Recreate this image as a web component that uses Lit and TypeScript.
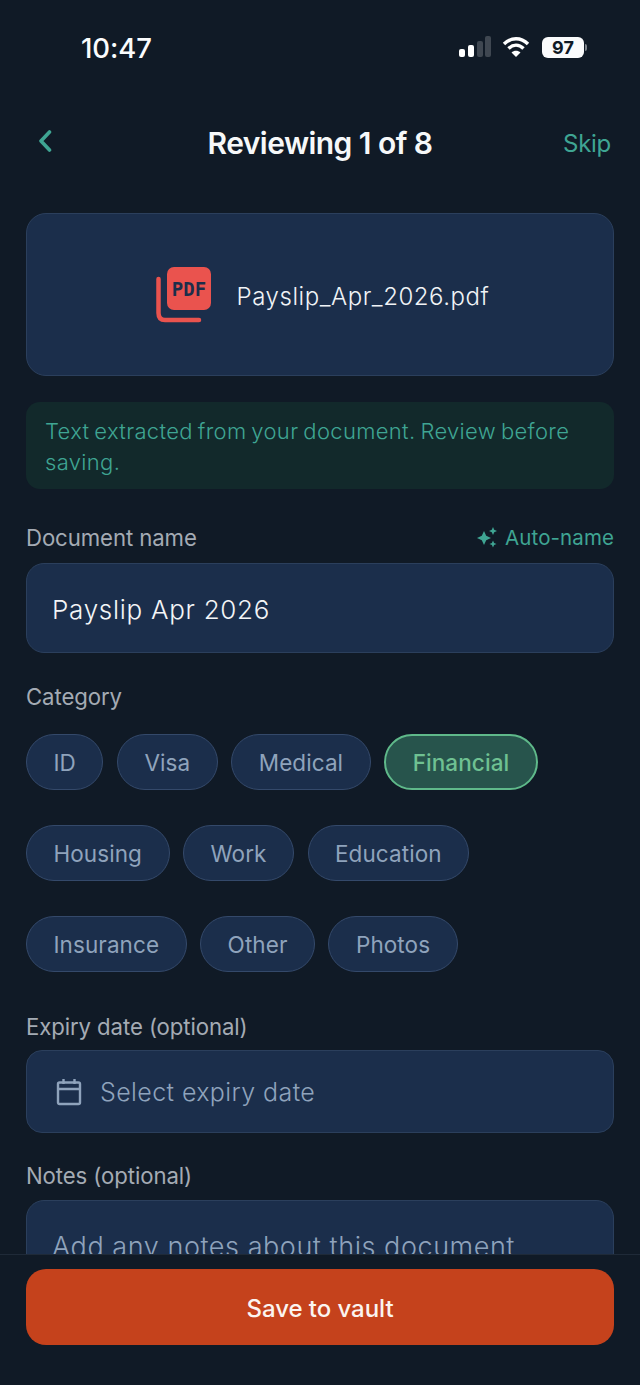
import { LitElement, html, css } from "lit";
import { customElement } from "lit/decorators.js";

const CHIP_ROWS = [
  ["ID", "Visa", "Medical", "Financial"],
  ["Housing", "Work", "Education"],
  ["Insurance", "Other", "Photos"],
];

@customElement("app-root")
export class AppRoot extends LitElement {
  static styles = css`
    :host { display: block; height: 1385px; background: #101a26; color: #fff; font-family: "Inter", "Noto Sans", sans-serif; overflow: hidden; }
    .page { height: 1385px; display: flex; flex-direction: column; }
    .status { height: 96px; flex: none; box-sizing: border-box; padding: 30px 53px 0 81px; display: flex; justify-content: space-between; align-items: flex-start; }
    .time { font-size: 27.5px; line-height: 36px; font-weight: 500; color: #fbfcfd; letter-spacing: -0.1px; }
    .sys { display: flex; align-items: center; gap: 11px; margin-top: 6px; }
    .batt { display: flex; align-items: center; gap: 1px; margin-left: 1px; }
    .batt-body { width: 42px; height: 21px; border-radius: 6px; background: #fafbfc; color: #101a26; font-size: 18px; font-weight: 700; display: flex; align-items: center; justify-content: center; }
    .batt-tip { width: 2px; height: 7px; border-radius: 0 2px 2px 0; background: #7d838b; }
    .nav { height: 94px; flex: none; box-sizing: border-box; padding: 0 29px 0 38px; display: grid; grid-template-columns: 51px 1fr 60px; align-items: center; }
    .title { text-align: center; font-size: 30px; font-weight: 600; letter-spacing: -0.55px; color: #f6f8f9; }
    .skip { text-align: right; font-size: 24px; color: #3fa593; font-weight: 400; letter-spacing: -0.3px; }
    .back { display: block; margin-top: -4px; }
    .scroll { flex: 1; min-height: 0; overflow: hidden; padding: 23px 26px 0; display: flex; flex-direction: column; }
    .file { height: 163px; flex: none; box-sizing: border-box; background: #1b2e4b; border: 1.5px solid #2b3f5c; border-radius: 20px; padding-left: 5px; display: flex; align-items: center; justify-content: center; gap: 25px; }
    .fname { font-size: 24px; color: #f0f3f6; font-weight: 300; letter-spacing: 0.55px; padding-top: 3px; }
    .banner { margin-top: 26px; background: #12292b; border-radius: 14px; height: 87px; box-sizing: border-box; padding: 14px 19px; font-size: 22px; line-height: 31px; color: #3fa593; font-weight: 300; letter-spacing: 0.33px; word-spacing: -1.6px; }
    .label-row { display: flex; justify-content: space-between; align-items: center; margin-top: 34px; height: 30px; }
    .label { font-size: 22.2px; line-height: 30px; color: #a4abb4; font-weight: 400; letter-spacing: -0.1px; }
    .auto { display: flex; align-items: center; gap: 7px; font-size: 20.5px; color: #3fa593; letter-spacing: 0.1px; margin-top: -2px; }
    .input { height: 90px; flex: none; margin-top: 10px; box-sizing: border-box; background: #1b2e4b; border: 1.5px solid #2b3f5c; border-radius: 18px; padding: 2px 25px 0; display: flex; align-items: center; font-size: 26px; font-weight: 300; color: #f3f5f7; letter-spacing: 0.72px; }
    .cat-label { margin-top: 29px; }
    .chips { display: flex; flex-direction: column; gap: 35px; margin-top: 22px; }
    .chip-row { display: flex; gap: 13.5px; }
    .chip { height: 56px; box-sizing: border-box; padding: 0 26.5px; border-radius: 29px; background: #1b2e4b; border: 1.5px solid #34496a; display: flex; align-items: center; font-size: 22.5px; color: #8fa3bc; font-family: "Inter", sans-serif; font-weight: 400; letter-spacing: 0.08px; }
    .chip.on { background: #27544c; border: 2px solid #5fb98a; color: #6fc192; font-weight: 500; }
    .exp-label { margin-top: 40px; }
    .date { height: 83px; flex: none; margin-top: 8px; box-sizing: border-box; background: #1b2e4b; border: 1.5px solid #2b3f5c; border-radius: 16px; padding: 0 29px; display: flex; align-items: center; gap: 18px; font-size: 25px; color: #8fa3bc; font-weight: 300; letter-spacing: 0.4px; }
    .note-label { margin-top: 28px; }
    .notes { height: 120px; flex: none; margin-top: 9px; box-sizing: border-box; background: #1b2e4b; border: 1.5px solid #2b3f5c; border-radius: 18px; padding: 27px 25px; font-size: 27px; line-height: 38px; color: #8fa3bc; font-weight: 300; letter-spacing: 0.55px; white-space: nowrap; }
    .footer { height: 131px; flex: none; box-sizing: border-box; border-top: 1px solid #1f2a38; background: #101a26; padding: 14px 26px 0; }
    .save { height: 76px; box-sizing: border-box; padding-top: 2px; border-radius: 20px; background: #c5421c; display: flex; align-items: center; justify-content: center; color: #fbf4f0; font-size: 24px; font-weight: 500; letter-spacing: -0.05px; }
  `;

  private signal() {
    return html`<svg width="33" height="22" viewBox="0 0 33 22">
      <rect x="1" y="13" width="6" height="8" rx="2" fill="#fff"/>
      <rect x="10" y="9" width="6" height="12" rx="2" fill="#fff"/>
      <rect x="19" y="5" width="6" height="16" rx="2" fill="#3f4751"/>
      <rect x="27" y="0" width="6" height="21" rx="2" fill="#3f4751"/>
    </svg>`;
  }

  private wifi() {
    return html`<svg width="28" height="22" viewBox="0 0 28 22" fill="none" stroke="#fff" stroke-width="3.4">
      <path d="M2 8 C9 1 19 1 26 8"/>
      <path d="M6.5 12.5 C11 8 17 8 21.5 12.5"/>
      <path d="M14 21 L9.5 16.5 C12 14 16 14 18.5 16.5 Z" fill="#fff" stroke="none"/>
    </svg>`;
  }

  private pdf() {
    return html`<svg width="56" height="56" viewBox="0 0 56 56">
      <rect x="11" y="0" width="44" height="43" rx="7" fill="#ea534e"/>
      <path d="M2.5 12 V46 Q2.5 53 9 53 H43" fill="none" stroke="#ea534e" stroke-width="4.5" stroke-linecap="round"/>
      <text x="33" y="28.5" text-anchor="middle" font-family="DejaVu Sans Mono, monospace" font-size="19" font-weight="700" fill="#1b2e4b">PDF</text>
    </svg>`;
  }

  private sparkle() {
    return html`<svg width="21" height="21" viewBox="0 0 21 21" fill="#3fa593">
      <path d="M7 4 L9.2 8.8 L14 11 L9.2 13.2 L7 18 L4.8 13.2 L0 11 L4.8 8.8 Z"/>
      <path d="M16 0 L17.2 2.8 L20 4 L17.2 5.2 L16 8 L14.8 5.2 L12 4 L14.8 2.8 Z"/>
      <path d="M16 13.5 L17.1 15.9 L19.5 17 L17.1 18.1 L16 20.5 L14.9 18.1 L12.5 17 L14.9 15.9 Z"/>
    </svg>`;
  }

  private calendar() {
    return html`<svg width="26" height="28" viewBox="0 0 26 28" fill="none" stroke="#8fa3bc" stroke-width="2.4">
      <rect x="2" y="4.5" width="22" height="21.5" rx="1.5"/>
      <path d="M2 11 H24 M7.5 1 V6 M18.5 1 V6"/>
    </svg>`;
  }

  render() {
    return html`<div class="page">
      <div class="status">
        <div class="time">10:47</div>
        <div class="sys">
          ${this.signal()}${this.wifi()}
          <div class="batt"><div class="batt-body">97</div><div class="batt-tip"></div></div>
        </div>
      </div>
      <div class="nav">
        <svg class="back" width="14" height="24" viewBox="0 0 14 24" fill="none" stroke="#3fa593" stroke-width="3.6" stroke-linecap="round" stroke-linejoin="round"><path d="M11.5 3 L3 12 L11.5 21"/></svg>
        <div class="title">Reviewing 1 of 8</div>
        <div class="skip">Skip</div>
      </div>
      <div class="scroll">
        <div class="file">${this.pdf()}<span class="fname">Payslip_Apr_2026.pdf</span></div>
        <div class="banner">Text extracted from your document. Review before saving.</div>
        <div class="label-row"><span class="label">Document name</span><span class="auto">${this.sparkle()}Auto-name</span></div>
        <div class="input">Payslip Apr 2026</div>
        <div class="label cat-label">Category</div>
        <div class="chips">
          ${CHIP_ROWS.map(r => html`<div class="chip-row">${r.map(c => html`<div class="chip ${c === "Financial" ? "on" : ""}">${c}</div>`)}</div>`)}
        </div>
        <div class="label exp-label">Expiry date (optional)</div>
        <div class="date">${this.calendar()}<span>Select expiry date</span></div>
        <div class="label note-label">Notes (optional)</div>
        <div class="notes">Add any notes about this document</div>
      </div>
      <div class="footer"><div class="save">Save to vault</div></div>
    </div>`;
  }
}
